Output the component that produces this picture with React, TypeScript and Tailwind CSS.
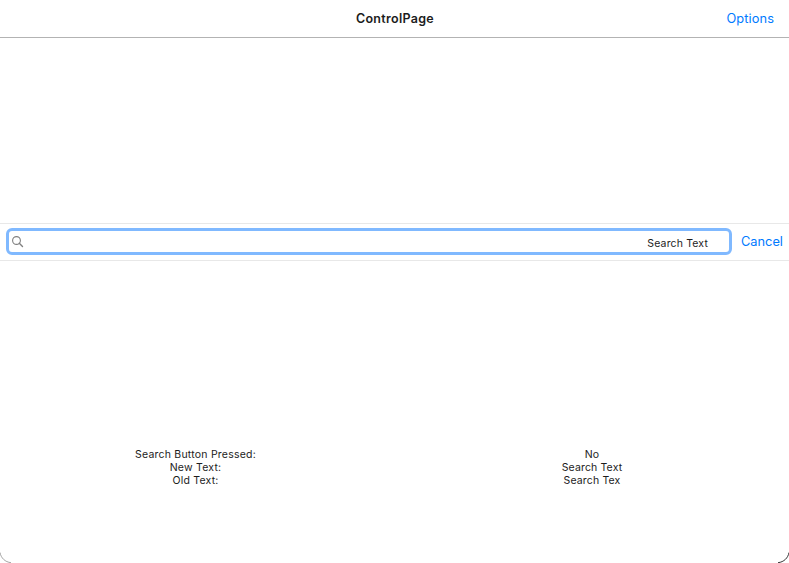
export default function App() {
  return (
    <div className="relative h-[563px] w-[789px] overflow-hidden bg-white font-['Inter',sans-serif]">
      <div className="flex h-full flex-col text-[#1c1c1c]">
        <header className="grid h-[38px] shrink-0 grid-cols-3 items-center border-b border-[#b3b3b3]">
          <span />
          <h1 className="pl-px text-center text-[12.5px] leading-4 font-semibold tracking-[0.3px]">ControlPage</h1>
          <button className="pt-px pr-[15px] text-right text-[12.8px] leading-4 tracking-[0.1px] text-[#007aff]">Options</button>
        </header>
        <div className="h-[185px] shrink-0" />
        <div className="flex h-[38px] shrink-0 items-start border-y border-[#e8e8e8] pt-[4px] pl-[6px]">
          <div className="flex h-[27px] w-[726px] items-center rounded-[6px] border-[3px] border-[#80b9ff] bg-white pr-[21px] pl-[3px]">
            <svg width="12" height="12" viewBox="0 0 12 12" fill="none" stroke="#808080" strokeWidth="1.1">
              <circle cx="4.5" cy="4.5" r="3.9" />
              <path d="M7.3 7.3L10.5 10.5" strokeWidth="1.4" strokeLinecap="round" />
            </svg>
            <span className="ml-auto pt-[4px] text-[10.5px] leading-3 tracking-[0.15px]">Search Text</span>
          </div>
          <button className="mt-[6px] ml-[9px] text-[12.8px] leading-4 text-[#007aff]">Cancel</button>
        </div>
        <div className="grid grid-cols-[391px_1fr] pt-[187px] text-center text-[10.5px] leading-[13px] tracking-[0.22px]">
          <div>
            <p>Search Button Pressed:</p>
            <p>New Text:</p>
            <p>Old Text:</p>
          </div>
          <div className="pl-[4px]">
            <p>No</p>
            <p className="tracking-[0.15px]">Search Text</p>
            <p className="tracking-[0.15px]">Search Tex</p>
          </div>
        </div>
      </div>
      {/* Rounded lower corners of the window */}
      <svg className="absolute bottom-0 left-0" width="11" height="11" fill="none" stroke="#9a9a9a" strokeWidth="0.9">
        <path d="M0 0.5C1 6 5 10 11 10.7" />
      </svg>
      <svg className="absolute right-0 bottom-0" width="11" height="11" fill="none" stroke="#333333">
        <path d="M11 0.5C10 6 6 10 0 10.7" />
      </svg>
    </div>
  );
}
